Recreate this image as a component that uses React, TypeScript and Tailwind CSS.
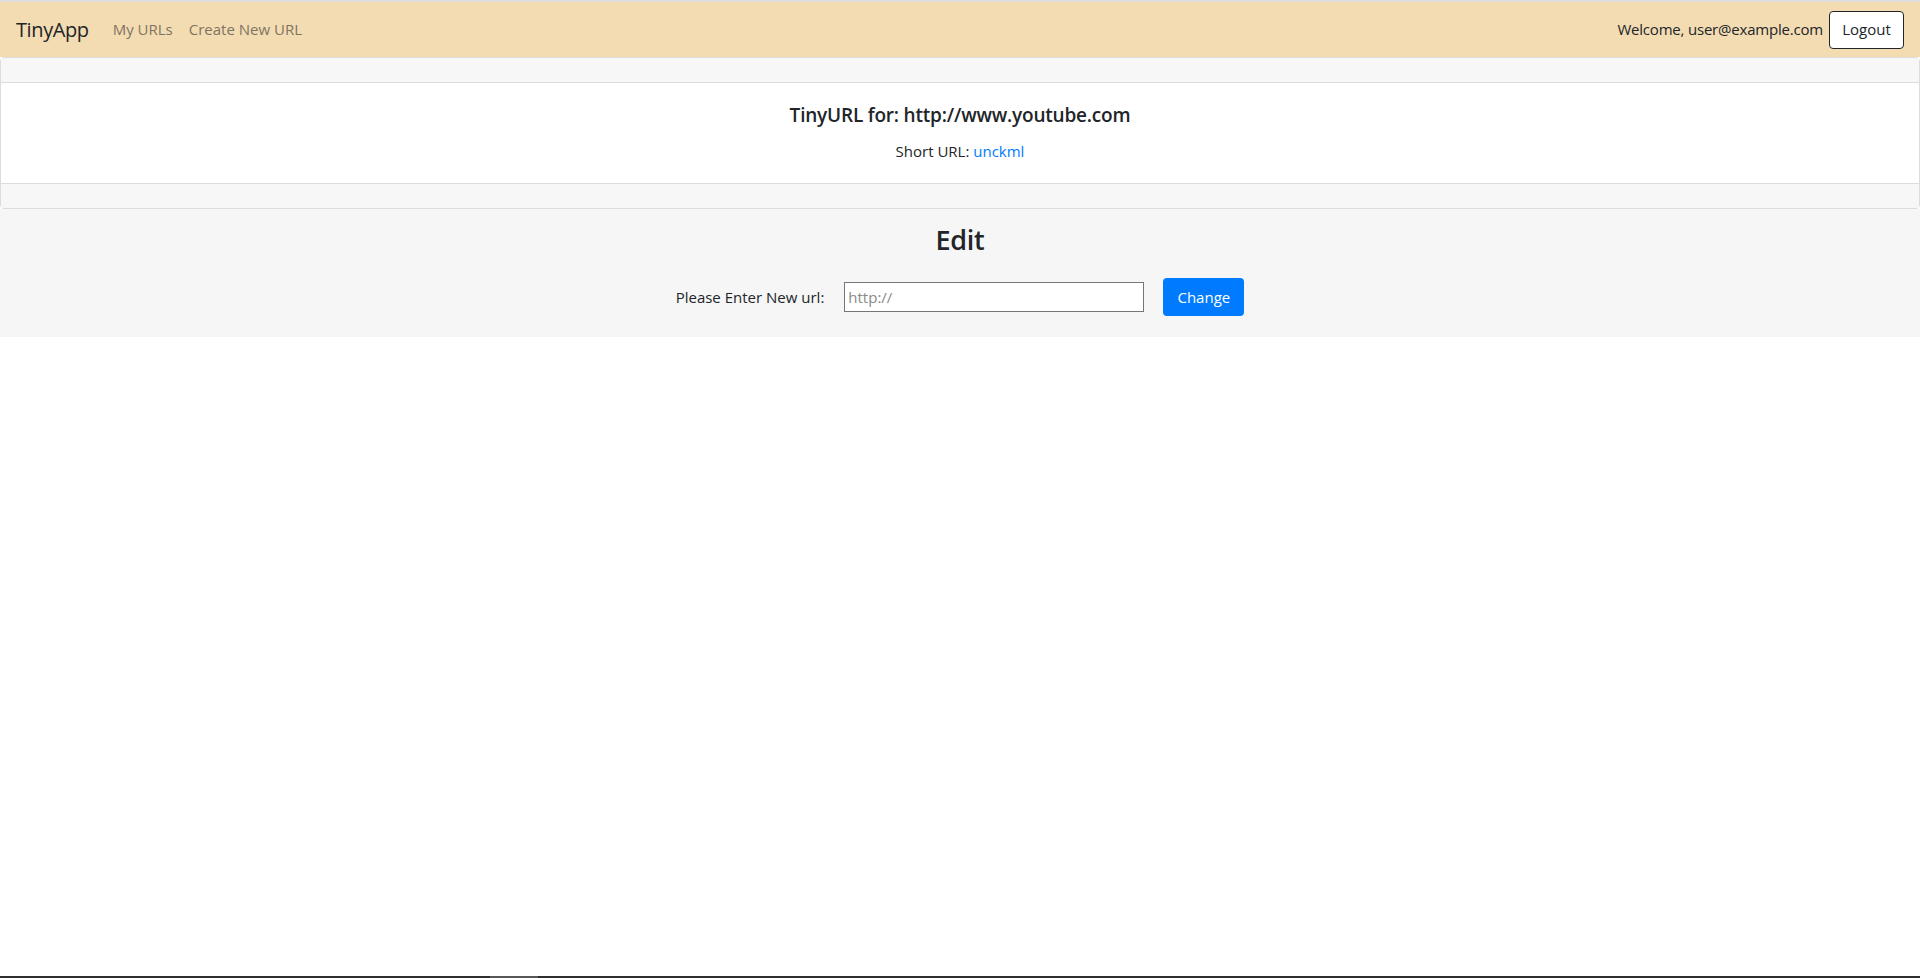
const font = { fontFamily: '"Open Sans", "Noto Sans", sans-serif' };

const Navbar = () => {
  return (
    <nav className="flex items-center justify-between h-[55px] px-4 bg-[#f3dcb2]">
      <div className="flex items-center">
        <a className="text-[20px] leading-[30px] text-[#212529] mr-4 tracking-[-0.4px]">TinyApp</a>
        <a className="px-2 text-[15px] text-[#7f7462]">My URLs</a>
        <a className="px-2 text-[15px] text-[#7f7462]">Create New URL</a>
      </div>
      <div className="flex items-center gap-[6px]">
        <span className="text-[15px] text-[#212529] tracking-[-0.2px]">Welcome, user@example.com</span>
        <button className="h-[38px] w-[75px] bg-white border border-[#212529] rounded-[4px] text-[15px] text-[#212529]">
          Logout
        </button>
      </div>
    </nav>
  );
};

const UrlCard = () => {
  return (
    <div className="border border-[#dcdcdc] rounded-[4px] bg-white">
      <div className="h-[25px] bg-[#f7f7f7] border-b border-[#dcdcdc]"></div>
      <div className="p-5 text-center">
        <h5 className="text-[19px] leading-[24px] font-semibold text-[#212529] mb-3 tracking-[-0.2px]">
          TinyURL for: http://www.youtube.com
        </h5>
        <p className="text-[15px] leading-[24px] text-[#212529]">
          Short URL: <a className="text-[#007bff]">unckml</a>
        </p>
      </div>
      <div className="h-[25px] bg-[#f7f7f7] border-t border-[#dcdcdc]"></div>
    </div>
  );
};

const EditForm = () => {
  return (
    <section className="bg-[#f6f6f6] pt-[14px] pb-[21px] text-center">
      <h3 className="text-[27px] leading-[34px] font-semibold text-[#212529] tracking-[-0.3px]">Edit</h3>
      <form className="mt-[21px] flex items-center justify-center">
        <label className="text-[15px] text-[#212529]">Please Enter New url:</label>
        <input
          type="text"
          placeholder="http://"
          className="ml-[20px] w-[300px] h-[30px] bg-white border border-[#767676] px-[3px] text-[15px] placeholder:text-[#8a8a8a]"
        />
        <button
          type="button"
          className="ml-[19px] h-[38px] w-[81px] bg-[#007bff] rounded-[4px] text-white text-[15px]"
        >
          Change
        </button>
      </form>
    </section>
  );
};

export default function App() {
  return (
    <div className="min-h-screen flex flex-col bg-white" style={font}>
      <div className="h-[2px] bg-[#dedede]"></div>
      <Navbar />
      <UrlCard />
      <EditForm />
      <div className="mt-auto h-[2px] bg-[#2f2f2f] flex">
        <div className="ml-[490px] w-[48px] bg-[#575757]"></div>
      </div>
    </div>
  );
}
